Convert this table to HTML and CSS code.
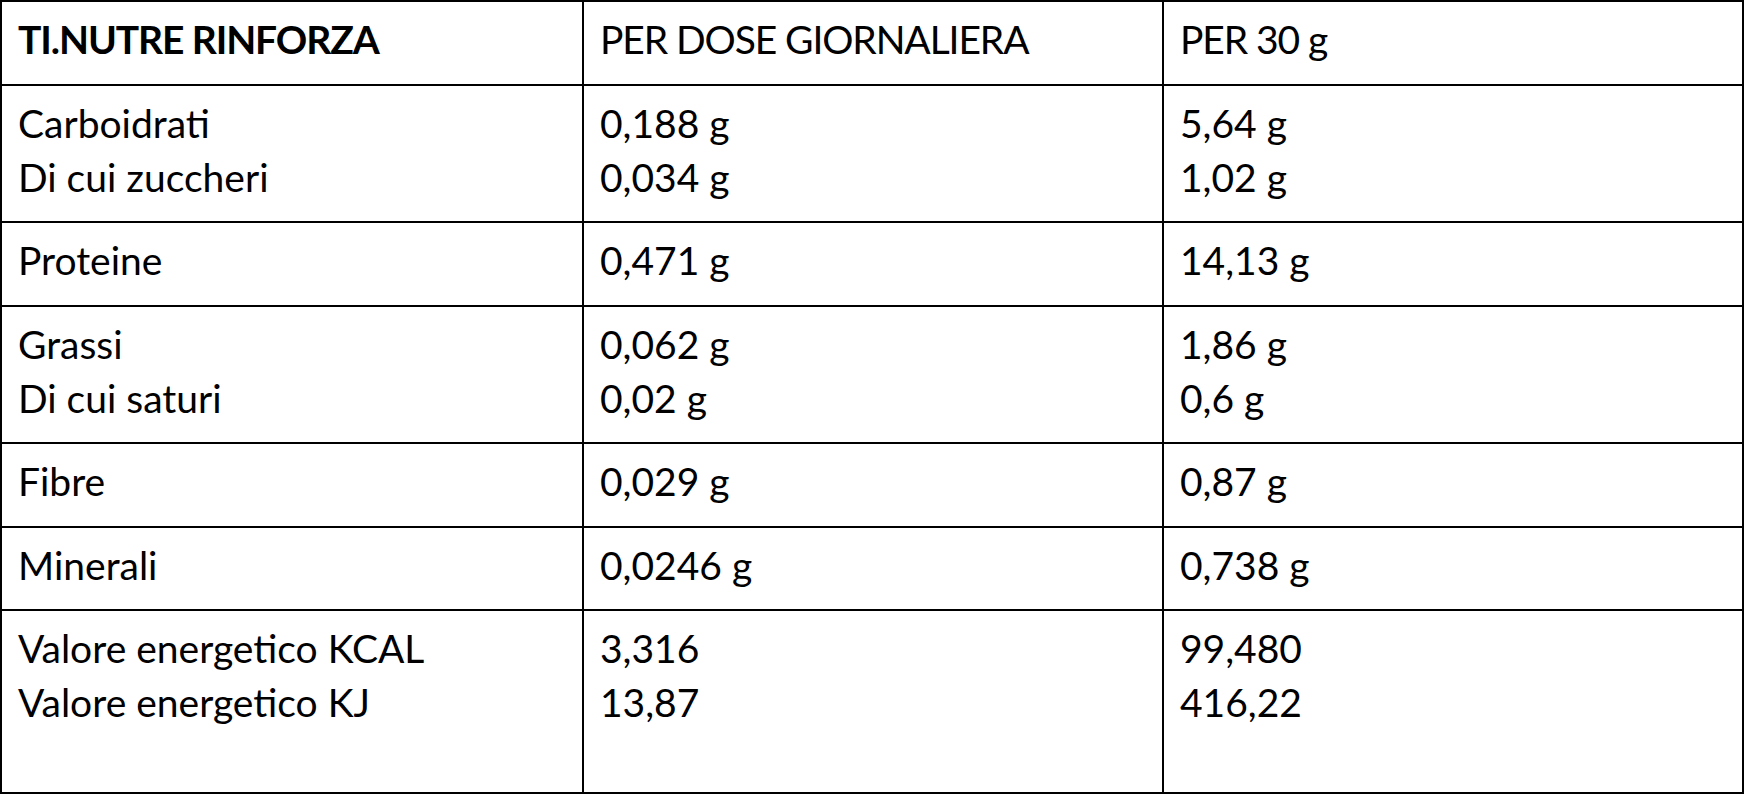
FILE: index.html
```html
<!DOCTYPE html>
<html lang="it">
<head>
<meta charset="utf-8">
<title>TI.NUTRE RINFORZA</title>
<link rel="stylesheet" href="styles.css">
</head>
<body>
<table class="nutri">
  <colgroup>
    <col class="c1"><col class="c2"><col class="c3">
  </colgroup>
  <thead>
    <tr>
      <th class="name">TI.NUTRE RINFORZA</th>
      <th>PER DOSE GIORNALIERA</th>
      <th>PER 30 g</th>
    </tr>
  </thead>
  <tbody>
    <tr>
      <td>Carboidrati<br>Di cui zuccheri</td>
      <td>0,188 g<br>0,034 g</td>
      <td>5,64 g<br>1,02 g</td>
    </tr>
    <tr>
      <td>Proteine</td>
      <td>0,471 g</td>
      <td>14,13 g</td>
    </tr>
    <tr>
      <td>Grassi<br>Di cui saturi</td>
      <td>0,062 g<br>0,02 g</td>
      <td>1,86 g<br>0,6 g</td>
    </tr>
    <tr>
      <td>Fibre</td>
      <td>0,029 g</td>
      <td>0,87 g</td>
    </tr>
    <tr>
      <td>Minerali</td>
      <td>0,0246 g</td>
      <td>0,738 g</td>
    </tr>
    <tr class="last">
      <td>Valore energetico KCAL<br>Valore energetico KJ</td>
      <td>3,316<br>13,87</td>
      <td>99,480<br>416,22</td>
    </tr>
  </tbody>
</table>
</body>
</html>
```

FILE: styles.css
```css
html, body {
  margin: 0;
  padding: 0;
  background: #fff;
}

.nutri {
  border-collapse: collapse;
  table-layout: fixed;
  width: 1742px;
  font-family: Lato, "Liberation Sans", sans-serif;
  font-size: 39px;
  line-height: 54px;
  color: #000;
}

.nutri .c1 { width: 582px; }
.nutri .c2 { width: 580px; }
.nutri .c3 { width: 580px; }

.nutri th,
.nutri td {
  border: 2px solid #000;
  padding: 10px 10px 17.5px 16px;
  text-align: left;
  vertical-align: top;
  font-weight: 400;
  white-space: nowrap;
}

.nutri th {
  letter-spacing: -1.1px;
}

.nutri th.name {
  font-weight: 700;
}

.nutri tr.last td {
  padding-bottom: 63px;
}
```
